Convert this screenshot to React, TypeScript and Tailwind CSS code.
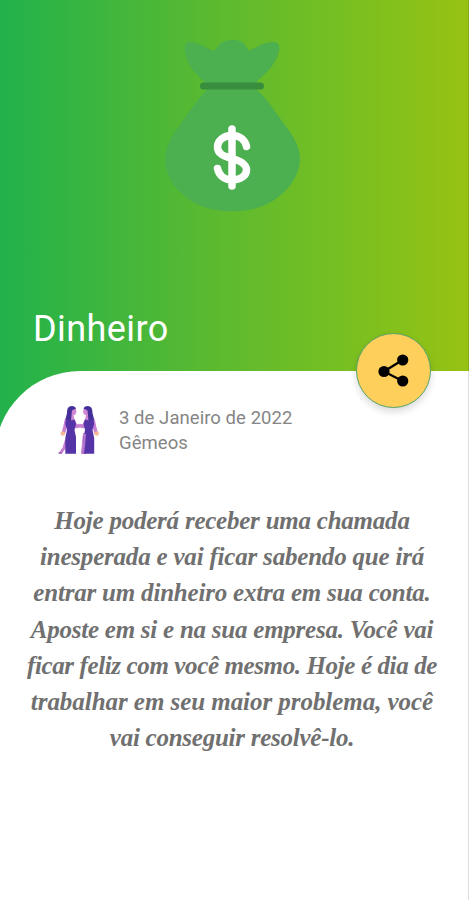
const message = [
  { text: 'Hoje poderá receber uma chamada', fit: 'tracking-[-0.23px]' },
  { text: 'inesperada e vai ficar sabendo que irá', fit: 'tracking-[-0.2px]' },
  { text: 'entrar um dinheiro extra em sua conta.', fit: 'tracking-[-0.2px]' },
  { text: 'Aposte em si e na sua empresa. Você vai', fit: 'tracking-[-0.24px]' },
  { text: 'ficar feliz com você mesmo. Hoje é dia de', fit: 'tracking-[-0.38px]' },
  { text: 'trabalhar em seu maior problema, você', fit: 'tracking-[-0.05px]' },
  { text: 'vai conseguir resolvê-lo.', fit: 'tracking-[-0.25px]' },
];

function MoneyBag() {
  return (
    <svg width="140" height="176" viewBox="162 38 140 176" fill="none">
      <path
        fill="#4caf50"
        d="M204 81C195 74 186 63 185 52C184 43 187 41 191 42C199 43 207 48 213 51C216 50 217 48 219 45C224 39 240 38 245 45L249 51C257 47 264 42 272 42C279 42 280 45 279 51C277 62 267 73 257 81V90C266 97 274 110 282 121C291 133 300 145 300 158C300 179 284 195 269 203C250 214 214 214 195 203C180 195 165 179 165 160C165 147 172 135 180 125C189 112 198 98 207 90Z"
      />
      <path d="M203.5 86H260.5" stroke="#388e3c" strokeWidth="7" strokeLinecap="round" />
      <path
        d="M232 129V186M246.500 146.500C245 139 239 135.500 232 135.500C223 135.500 217.500 141 217.500 147C217.500 153.500 223 156 232 158.500C241 161 246.500 164 246.500 170C246.500 176 240 180 232 180C225 180 219 176 217.500 168.500"
        stroke="#fff"
        strokeWidth="7.500"
        strokeLinecap="round"
      />
    </svg>
  );
}

function Woman() {
  return (
    <>
      <path d="M66.500 420L65 427L63.500 432.500" stroke="#c77fd2" strokeWidth="3.600" strokeLinecap="round" strokeLinejoin="round" />
      <circle cx="62.800" cy="433.500" r="2.300" fill="#f7b896" />
      <path d="M73 420L76 426.500L80 425.500" stroke="#c77fd2" strokeWidth="3.600" strokeLinejoin="round" />
      <path fill="#cf87d4" d="M71 408L75.500 408L76.500 411.500L75.500 414.500L73.500 415L74.500 420H68Z" />
      <path
        fill="#45309a"
        d="M72 406C68 406 67 409 67 413L65.500 419L68 421H71L71.500 415L72 410.500L76 408.500C75.500 407 74 406 72 406Z"
      />
      <path fill="#5534a8" d="M66 418.500L70 420.500L74.500 419.500L76 424L74.500 430L76 437V453.700H65.300V438L67 430L65.300 424Z" />
    </>
  );
}

function Gemini() {
  return (
    <svg className="shrink-0" width="44" height="52" viewBox="56 403 44 52" fill="none">
      <path d="M66.500 440L64 448L60.500 453" stroke="#c77fd2" strokeWidth="3" />
      <path d="M58.500 453H62" stroke="#9b54bd" strokeWidth="1.500" />
      <path d="M83.500 433L81.500 453.500H86" fill="#c77fd2" stroke="#c77fd2" strokeWidth="1" />
      <Woman />
      <g transform="translate(159.500 0) scale(-1 1)">
        <Woman />
      </g>
      <path d="M85 434L84 446L83 453" stroke="#b576d0" strokeWidth="2" />
    </svg>
  );
}

function ShareButton() {
  return (
    <button
      aria-label="Partilhar"
      className="absolute -top-[38px] right-[37px] flex h-[75px] w-[75px] items-center justify-center rounded-full border border-[#58a36a] bg-[#fecf5b] shadow-[0_4px_7px_rgba(0,0,0,0.14)]"
    >
      <svg width="32" height="34" viewBox="378 354 32 34">
        <path d="M402.500 360L384 371.500L402.500 381" fill="none" stroke="#000" strokeWidth="2.300" />
        <circle cx="402.700" cy="360" r="5.600" />
        <circle cx="384" cy="371.500" r="5.600" />
        <circle cx="402.700" cy="381" r="5.600" />
      </svg>
    </button>
  );
}

export default function App() {
  return (
    <main className="h-[900px] w-[469px] overflow-hidden bg-[linear-gradient(90deg,#22b14b_0%,#2eb445_10%,#5bb930_45%,#76bf22_72%,#97c213_100%)] font-['Roboto',sans-serif]">
      <header className="flex h-[371px] flex-col border-r border-[#84a91b] pt-[38px]">
        <div className="flex justify-center pr-[4px]">
          <MoneyBag />
        </div>
        <h1 className="mt-[92px] pl-[33px] text-[36px] leading-[46px] font-normal tracking-[0.42px] text-white">
          Dinheiro
        </h1>
      </header>
      <section className="relative -ml-[5px] h-[529px] rounded-tl-[85px] border-r border-[#dedede] bg-white">
        <ShareButton />
        <div className="flex pt-[32px] pl-[61px]">
          <Gemini />
          <div className="ml-[19px] pt-[3px] text-[18.500px] leading-[25px] tracking-[0.06px] text-[#858585]">
            <p>3 de Janeiro de 2022</p>
            <p>Gêmeos</p>
          </div>
        </div>
        <div className="mt-[47px] flex flex-col items-center pl-[5px] pr-[4px] font-['Liberation_Serif',serif] text-[25px] leading-[36.170px] font-bold text-[#707070] italic">
          {message.map((line) => (
            <p key={line.text} className={`whitespace-nowrap ${line.fit}`}>
              {line.text}
            </p>
          ))}
        </div>
      </section>
    </main>
  );
}
